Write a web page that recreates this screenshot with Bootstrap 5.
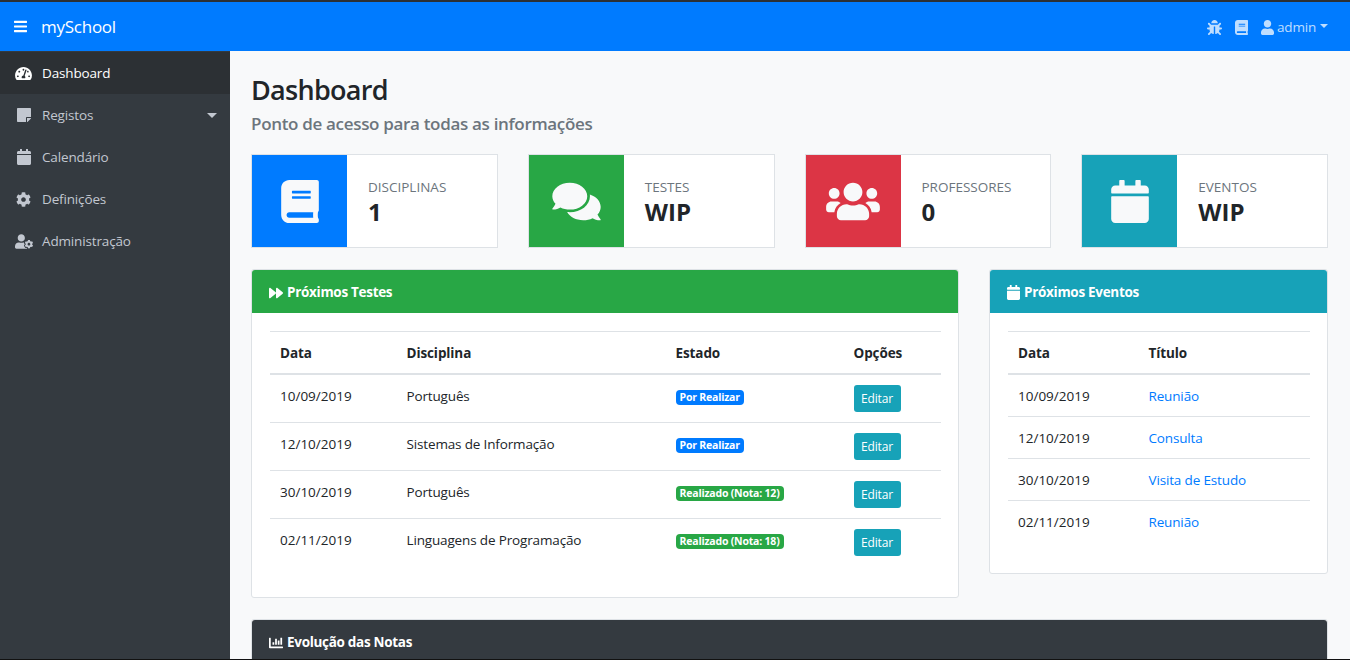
<!DOCTYPE html>
<html lang="pt">
<head>
    <meta charset="UTF-8">
    <meta name="viewport" content="width=device-width, initial-scale=1.0">
    <title>mySchool</title>
    <link href="https://cdn.jsdelivr.net/npm/bootstrap@5.3.0/dist/css/bootstrap.min.css" rel="stylesheet">
    <style>
        html, body { height: 100%; overflow: hidden; }
        body {
            background-color: #f8f9fa;
            color: #212529;
            font-family: "Open Sans", "Noto Sans", sans-serif;
            font-size: 13.5px;
            line-height: 21px;
        }
        .ico { fill: currentColor; display: inline-block; flex: none; }
        .app-frame { height: 660px; border-top: 2px solid #2b3035; border-bottom: 1px solid #111; display: flex; flex-direction: column; overflow: hidden; }

        .top-bar { background-color: #007bff; height: 49px; padding: 0 22px 0 14px; flex: none; }
        .top-toggle { color: #fff; line-height: 0; }
        .top-brand { color: #fff; font-size: 17px; letter-spacing: -.25px; margin-left: 14px; text-decoration: none; }
        .top-link { color: rgba(255, 255, 255, .75); text-decoration: none; font-size: 13.5px; letter-spacing: -.2px; padding-top: 2px; }
        .top-gap { margin-left: 13px; }
        .top-user { margin-right: 3px; }
        .top-caret { width: 0; height: 0; border-left: 4px solid transparent; border-right: 4px solid transparent; border-top: 4px solid rgba(255, 255, 255, .75); margin-left: 4px; margin-top: -3px; }

        .side-menu { width: 230px; background-color: #343a40; flex: none; padding-top: 1px; }
        .side-item { height: 42px; padding: 0 15px; color: #c2c7d0; text-decoration: none; font-size: 13.5px; letter-spacing: -.15px; }
        .side-item:hover { color: #fff; }
        .side-item.is-on { background-color: #2c3034; color: #fff; }
        .side-icon { width: 17px; margin-right: 10px; display: flex; justify-content: center; }
        .side-caret { margin-left: auto; margin-right: -2px; width: 0; height: 0; border-left: 5px solid transparent; border-right: 5px solid transparent; border-top: 5px solid #c2c7d0; }

        .main-area { padding: 21px 22px 0 21px; min-width: 0; flex: 1; }
        .page-title { font-size: 27px; line-height: 35px; font-weight: 600; letter-spacing: -.7px; margin: 0; }
        .page-sub { font-size: 17px; line-height: 30px; font-weight: 600; letter-spacing: -.32px; color: #6c757d; margin: 2px 0 15px; }

        .grid-row { --bs-gutter-x: 30px; }
        .stat-box { background: #fff; border: 1px solid #dee2e6; height: 94px; margin-bottom: 21px; }
        .stat-icon { width: 95px; flex: none; color: #f8f9fa; }
        .stat-text { padding-left: 21px; padding-top: 2px; }
        .stat-label { font-size: 13.5px; line-height: 20px; color: #6c757d; }
        .stat-value { font-size: 24px; line-height: 30px; font-weight: 700; }
        .bg-blue { background-color: #007bff; }
        .bg-green { background-color: #28a745; }
        .bg-red { background-color: #dc3545; }
        .bg-teal { background-color: #17a2b8; }
        .bg-slate { background-color: #343a40; }

        .panel { border: 1px solid #dee2e6; border-radius: 3px; margin-bottom: 21px; --bs-card-bg: #fff; }
        .panel .card-header { height: 43px; padding: 2px 17px 0; color: #fff; font-weight: 700; font-size: 13.5px; letter-spacing: -.3px; border: 0; border-radius: 3px 3px 0 0; display: flex; align-items: center; gap: 4px; }
        .panel .card-body { padding: 18px 17px 0 18px; }
        .panel .table { margin-bottom: 31px; font-size: 13.5px; color: #212529; --bs-table-bg: transparent; }
        .panel .table th, .panel .table td { padding: 11px 10.5px 9px; line-height: 21px; border-top: 1px solid #dee2e6; border-bottom: 0; vertical-align: top; }
        .panel .table th:first-child, .panel .table td:first-child { padding-left: 10px; }
        .panel .table td.edit-cell { padding-top: 10px; padding-bottom: 10px; }
        .panel .table td:not(:first-child) { letter-spacing: -.15px; }
        .panel .table th { letter-spacing: -.1px; }
        .panel .table thead th { border-bottom: 2px solid #dee2e6; }
        .panel .table tbody tr:first-child td { border-top: 0; }
        .panel .table td a { color: #007bff; text-decoration: none; }
        .state-tag { font-size: 10.5px; line-height: 11px; padding: 2px 4px; font-weight: 700; border-radius: 4px; display: inline-block; letter-spacing: -.2px; }
        .panel .table td a.edit-btn { background-color: #17a2b8; border: 0; color: #fff; font-size: 12px; height: 27px; width: 47px; padding: 0; border-radius: 3px; line-height: 27px; display: block; }
        .panel .table td a.edit-btn:hover { background-color: #138496; }
    </style>
</head>
<body>
    <svg width="0" height="0" class="position-absolute">
        <symbol id="i-bars" viewBox="0 0 448 512"><path d="M16 132h416c8.837 0 16-7.163 16-16V76c0-8.837-7.163-16-16-16H16C7.163 60 0 67.163 0 76v40c0 8.837 7.163 16 16 16zm0 160h416c8.837 0 16-7.163 16-16v-40c0-8.837-7.163-16-16-16H16c-8.837 0-16 7.163-16 16v40c0 8.837 7.163 16 16 16zm0 160h416c8.837 0 16-7.163 16-16v-40c0-8.837-7.163-16-16-16H16c-8.837 0-16 7.163-16 16v40c0 8.837 7.163 16 16 16z"/></symbol>
        <symbol id="i-calendar" viewBox="0 0 448 512"><path d="M12 192h424c6.6 0 12 5.4 12 12v260c0 26.5-21.5 48-48 48H48c-26.5 0-48-21.5-48-48V204c0-6.6 5.4-12 12-12zm436-44v-36c0-26.5-21.5-48-48-48h-48V12c0-6.6-5.4-12-12-12h-40c-6.6 0-12 5.4-12 12v52H160V12c0-6.6-5.4-12-12-12h-40c-6.6 0-12 5.4-12 12v52H48C21.5 64 0 85.5 0 112v36c0 6.6 5.4 12 12 12h424c6.6 0 12-5.4 12-12z"/></symbol>
        <symbol id="i-book" viewBox="0 0 448 512"><path d="M448 360V24c0-13.3-10.7-24-24-24H96C43 0 0 43 0 96v320c0 53 43 96 96 96h328c13.3 0 24-10.7 24-24v-16c0-7.5-3.5-14.3-8.9-18.7-4.2-15.4-4.2-59.3 0-74.7 5.4-4.3 8.9-11.1 8.9-18.6zM128 134c0-3.3 2.7-6 6-6h212c3.3 0 6 2.7 6 6v20c0 3.3-2.7 6-6 6H134c-3.3 0-6-2.7-6-6v-20zm0 64c0-3.3 2.7-6 6-6h212c3.3 0 6 2.7 6 6v20c0 3.3-2.7 6-6 6H134c-3.3 0-6-2.7-6-6v-20zm253.4 250H96c-17.7 0-32-14.3-32-32 0-17.6 14.4-32 32-32h285.4c-1.9 17.1-1.9 46.9 0 64z"/></symbol>
        <symbol id="i-comments" viewBox="0 0 576 512"><path d="M416 192c0-88.4-93.1-160-208-160S0 103.6 0 192c0 34.3 14.1 65.9 38 92-13.4 30.2-35.5 54.2-35.8 54.5-2.2 2.3-2.8 5.7-1.5 8.7S4.8 352 8 352c36.6 0 66.9-12.3 88.7-25 32.2 15.7 70.3 25 111.3 25 114.9 0 208-71.6 208-160zm122 220c23.9-26 38-57.7 38-92 0-66.9-53.5-124.2-129.3-148.1.9 6.6 1.3 13.3 1.3 20.1 0 105.9-107.7 192-240 192-10.8 0-21.3-.8-31.7-1.9C207.8 439.6 281.8 480 368 480c41 0 79.1-9.2 111.3-25 21.8 12.7 52.1 25 88.7 25 3.2 0 6.1-1.9 7.3-4.8 1.3-2.9.7-6.3-1.5-8.7-.3-.3-22.4-24.2-35.8-54.5z"/></symbol>
        <symbol id="i-users" viewBox="0 0 640 512"><path d="M96 224c35.3 0 64-28.7 64-64s-28.7-64-64-64-64 28.7-64 64 28.7 64 64 64zm448 0c35.3 0 64-28.7 64-64s-28.7-64-64-64-64 28.7-64 64 28.7 64 64 64zm32 32h-64c-17.6 0-33.5 7.1-45.1 18.6 40.3 22.1 68.9 62 75.1 109.4h66c17.7 0 32-14.3 32-32v-32c0-35.3-28.7-64-64-64zm-256 0c61.9 0 112-50.1 112-112S381.9 32 320 32 208 82.1 208 144s50.1 112 112 112zm76.8 32h-8.3c-20.8 10-43.9 16-68.5 16s-47.6-6-68.5-16h-8.3C179.6 288 128 339.6 128 403.2V432c0 26.5 21.5 48 48 48h288c26.5 0 48-21.5 48-48v-28.8c0-63.6-51.6-115.2-115.2-115.2zm-223.7-13.4C161.5 263.1 145.6 256 128 256H64c-35.3 0-64 28.7-64 64v32c0 17.7 14.3 32 32 32h65.9c6.3-47.4 34.9-87.3 75.2-109.4z"/></symbol>
        <symbol id="i-user" viewBox="0 0 448 512"><path d="M224 256c70.7 0 128-57.3 128-128S294.7 0 224 0 96 57.3 96 128s57.3 128 128 128zm89.6 32h-16.7c-22.2 10.2-46.9 16-72.9 16s-50.6-5.8-72.9-16h-16.7C60.2 288 0 348.2 0 422.4V464c0 26.5 21.5 48 48 48h352c26.5 0 48-21.5 48-48v-41.6c0-74.2-60.2-134.4-134.4-134.4z"/></symbol>
        <symbol id="i-forward" viewBox="0 0 512 512"><path d="M500.5 231.4l-192-160C287.9 54.3 256 68.6 256 96v320c0 27.4 31.9 41.8 52.5 24.6l192-160c15.3-12.8 15.3-36.4 0-49.2zm-256 0l-192-160C31.9 54.3 0 68.6 0 96v320c0 27.4 31.9 41.8 52.5 24.6l192-160c15.3-12.8 15.3-36.4 0-49.2z"/></symbol>
        <symbol id="i-chart" viewBox="0 0 512 512"><path d="M332.8 320h38.4c6.4 0 12.8-6.4 12.8-12.8V172.8c0-6.4-6.4-12.8-12.8-12.8h-38.4c-6.4 0-12.8 6.4-12.8 12.8v134.4c0 6.4 6.4 12.8 12.8 12.8zm96 0h38.4c6.4 0 12.8-6.4 12.8-12.8V76.8c0-6.4-6.4-12.8-12.8-12.8h-38.4c-6.4 0-12.8 6.4-12.8 12.8v230.4c0 6.4 6.4 12.8 12.8 12.8zm-288 0h38.4c6.4 0 12.8-6.4 12.8-12.8v-70.4c0-6.4-6.4-12.8-12.8-12.8h-38.4c-6.4 0-12.8 6.4-12.8 12.8v70.4c0 6.4 6.4 12.8 12.8 12.8zm96 0h38.4c6.4 0 12.8-6.4 12.8-12.8V108.8c0-6.4-6.4-12.8-12.8-12.8h-38.4c-6.4 0-12.8 6.4-12.8 12.8v198.4c0 6.4 6.4 12.8 12.8 12.8zM496 384H64V80c0-8.84-7.16-16-16-16H16C7.16 64 0 71.16 0 80v336c0 17.67 14.33 32 32 32h464c8.84 0 16-7.16 16-16v-32c0-8.84-7.16-16-16-16z"/></symbol>
        <symbol id="i-cog" viewBox="0 0 512 512"><path d="M487.4 315.7l-42.6-24.6c4.3-23.2 4.3-47 0-70.2l42.6-24.6c4.9-2.8 7.1-8.6 5.5-14-11.1-35.6-30-67.8-54.7-94.6-3.8-4.1-10-5.1-14.8-2.3L380.8 110c-17.9-15.4-38.5-27.3-60.8-35.1V25.8c0-5.6-3.9-10.5-9.4-11.7-36.7-8.2-74.3-7.8-109.2 0-5.5 1.2-9.4 6.1-9.4 11.7V75c-22.2 7.9-42.8 19.8-60.8 35.1L88.7 85.5c-4.9-2.8-11-1.9-14.8 2.3-24.7 26.7-43.6 58.9-54.7 94.6-1.7 5.4.6 11.2 5.5 14L67.3 221c-4.3 23.2-4.3 47 0 70.2l-42.6 24.6c-4.9 2.8-7.1 8.6-5.5 14 11.1 35.6 30 67.8 54.7 94.6 3.8 4.1 10 5.1 14.8 2.3l42.6-24.6c17.9 15.4 38.5 27.3 60.8 35.1v49.2c0 5.6 3.9 10.5 9.4 11.7 36.7 8.2 74.3 7.8 109.2 0 5.5-1.2 9.4-6.1 9.4-11.7v-49.2c22.2-7.9 42.8-19.8 60.8-35.1l42.6 24.6c4.9 2.8 11 1.9 14.8-2.3 24.7-26.7 43.6-58.9 54.7-94.6 1.5-5.5-.7-11.3-5.6-14.1zM256 336c-44.1 0-80-35.9-80-80s35.9-80 80-80 80 35.9 80 80-35.9 80-80 80z"/></symbol>
        <symbol id="i-gauge" viewBox="0 0 576 512"><path d="M288 32C128.94 32 0 160.94 0 320c0 52.8 14.25 102.26 39.06 144.8 5.61 9.62 16.3 15.2 27.44 15.2h443c11.14 0 21.83-5.58 27.44-15.2C561.75 422.26 576 372.8 576 320c0-159.06-128.94-288-288-288zm0 64c14.71 0 26.58 10.13 30.32 23.65-1.11 2.26-2.64 4.23-3.45 6.67l-9.22 27.67c-5.13 3.49-10.97 6.01-17.64 6.01-17.67 0-32-14.33-32-32S270.33 96 288 96zM96 384c-17.67 0-32-14.33-32-32s14.33-32 32-32 32 14.33 32 32-14.33 32-32 32zm48-160c-17.67 0-32-14.33-32-32s14.33-32 32-32 32 14.33 32 32-14.33 32-32 32zm246.77-72.41l-61.33 184C343.13 347.33 352 364.54 352 384c0 11.72-3.38 22.55-8.88 32H232.88c-5.5-9.45-8.88-20.28-8.88-32 0-33.94 26.5-61.43 59.9-63.59l61.34-184.01c4.17-12.56 17.73-19.45 30.36-15.17 12.57 4.19 19.35 17.79 15.17 30.36zm14.66 57.2l15.52-46.55c3.47-1.29 7.13-2.23 11.05-2.23 17.67 0 32 14.33 32 32s-14.33 32-32 32c-11.38-.01-20.89-6.28-26.57-15.22zM480 384c-17.67 0-32-14.33-32-32s14.33-32 32-32 32 14.33 32 32-14.33 32-32 32z"/></symbol>
        <symbol id="i-note" viewBox="0 0 448 512"><path d="M312 320h136V56c0-13.3-10.7-24-24-24H24C10.7 32 0 42.7 0 56v400c0 13.3 10.7 24 24 24h264V344c0-13.2 10.8-24 24-24zm129 55l-98 98c-4.5 4.5-10.6 7-17 7h-6V352h128v6.1c0 6.3-2.5 12.4-7 16.9z"/></symbol>
        <symbol id="i-usercog" viewBox="0 0 640 512"><path d="M610.5 373.3c2.6-14.1 2.6-28.5 0-42.6l25.8-14.9c3-1.7 4.3-5.2 3.3-8.5-6.7-21.6-18.2-41.2-33.2-57.4-2.3-2.5-6-3.1-9-1.4l-25.8 14.9c-10.9-9.3-23.4-16.5-36.9-21.3v-29.8c0-3.4-2.4-6.4-5.7-7.1-22.3-5-45-4.8-66.2 0-3.3.7-5.7 3.7-5.7 7.1v29.8c-13.5 4.8-26 12-36.9 21.3l-25.8-14.9c-2.9-1.7-6.7-1.1-9 1.4-15 16.2-26.5 35.8-33.2 57.4-1 3.3.4 6.8 3.3 8.5l25.8 14.9c-2.6 14.1-2.6 28.5 0 42.6l-25.8 14.9c-3 1.7-4.3 5.2-3.3 8.5 6.7 21.6 18.2 41.1 33.2 57.4 2.3 2.5 6 3.1 9 1.4l25.8-14.9c10.9 9.3 23.4 16.5 36.9 21.3v29.8c0 3.4 2.4 6.4 5.7 7.1 22.3 5 45 4.8 66.2 0 3.3-.7 5.7-3.7 5.7-7.1v-29.8c13.5-4.8 26-12 36.9-21.3l25.8 14.9c2.9 1.7 6.7 1.1 9-1.4 15-16.2 26.5-35.8 33.2-57.4 1-3.3-.4-6.8-3.3-8.5l-25.8-14.9zM496 400.5c-26.8 0-48.5-21.8-48.5-48.5s21.8-48.5 48.5-48.5 48.5 21.8 48.5 48.5-21.7 48.5-48.5 48.5zM224 256c70.7 0 128-57.3 128-128S294.7 0 224 0 96 57.3 96 128s57.3 128 128 128zm201.2 226.5c-2.3-1.2-4.6-2.6-6.8-3.9l-7.9 4.6c-6 3.4-12.8 5.3-19.6 5.3-10.9 0-21.4-4.6-28.9-12.6-18.3-19.8-32.3-43.9-40.2-69.6-5.5-17.7 1.9-36.4 17.9-45.7l7.9-4.6c-.1-2.6-.1-5.2 0-7.8l-7.9-4.6c-16-9.2-23.4-28-17.9-45.7.9-2.9 2.2-5.8 3.2-8.7-3.8-.3-7.5-1.2-11.4-1.2h-16.7c-22.2 10.2-46.9 16-72.9 16s-50.6-5.8-72.9-16h-16.7C60.2 288 0 348.2 0 422.4V464c0 26.5 21.5 48 48 48h352c10.1 0 19.5-3.2 27.2-8.5-1.2-3.8-2-7.7-2-11.8v-9.2z"/></symbol>
        <symbol id="i-bug" viewBox="0 0 512 512"><path d="M511.988 288.9c-.478 17.43-15.217 31.1-32.653 31.1H424v16c0 21.864-4.882 42.584-13.6 61.145l60.228 60.228c12.496 12.497 12.496 32.758 0 45.255-12.498 12.497-32.759 12.496-45.256 0l-54.736-54.736C345.886 467.965 314.351 480 280 480V236c0-6.627-5.373-12-12-12h-24c-6.627 0-12 5.373-12 12v244c-34.351 0-65.886-12.035-90.636-32.108l-54.736 54.736c-12.498 12.497-32.759 12.496-45.256 0-12.496-12.497-12.496-32.758 0-45.255l60.228-60.228C92.882 378.584 88 357.864 88 336v-16H32.666C15.23 320 .491 306.33.013 288.9-.484 270.816 14.028 256 32 256h56v-58.745l-46.628-46.628c-12.496-12.497-12.496-32.758 0-45.255 12.498-12.497 32.758-12.497 45.256 0L141.255 160h229.489l54.627-54.627c12.498-12.497 32.758-12.497 45.256 0 12.496 12.497 12.496 32.758 0 45.255L424 197.255V256h56c17.972 0 32.484 14.816 31.988 32.9zM257 0c-61.856 0-112 50.144-112 112h224C369 50.144 318.856 0 257 0z"/></symbol>
    </svg>

    <div class="app-frame">
        <nav class="top-bar d-flex align-items-center">
            <a class="top-toggle" href="#"><svg class="ico" width="13" height="15"><use href="#i-bars"/></svg></a>
            <a class="top-brand" href="#">mySchool</a>
            <div class="ms-auto d-flex align-items-center">
                <a class="top-link d-flex" href="#"><svg class="ico" width="15" height="15"><use href="#i-bug"/></svg></a>
                <a class="top-link d-flex top-gap" href="#"><svg class="ico" width="13" height="15"><use href="#i-book"/></svg></a>
                <a class="top-link d-flex align-items-center top-gap" href="#"><svg class="ico top-user" width="13" height="15"><use href="#i-user"/></svg>admin<span class="top-caret"></span></a>
            </div>
        </nav>

        <div class="d-flex flex-grow-1" style="min-height:0">
            <aside class="side-menu">
                <a class="side-item is-on d-flex align-items-center" href="#"><span class="side-icon"><svg class="ico" width="17" height="15"><use href="#i-gauge"/></svg></span>Dashboard</a>
                <a class="side-item d-flex align-items-center" href="#"><span class="side-icon"><svg class="ico" width="14" height="16"><use href="#i-note"/></svg></span>Registos<span class="side-caret"></span></a>
                <a class="side-item d-flex align-items-center" href="#"><span class="side-icon"><svg class="ico" width="14" height="16"><use href="#i-calendar"/></svg></span>Calendário</a>
                <a class="side-item d-flex align-items-center" href="#"><span class="side-icon"><svg class="ico" width="15" height="15"><use href="#i-cog"/></svg></span>Definições</a>
                <a class="side-item d-flex align-items-center" href="#"><span class="side-icon"><svg class="ico" width="18" height="15"><use href="#i-usercog"/></svg></span>Administração</a>
            </aside>

            <main class="main-area">
                <h1 class="page-title">Dashboard</h1>
                <p class="page-sub">Ponto de acesso para todas as informações</p>

                <div class="row grid-row">
                    <div class="col-3">
                        <div class="stat-box d-flex">
                            <div class="stat-icon bg-blue d-flex align-items-center justify-content-center"><svg class="ico" width="38" height="43"><use href="#i-book"/></svg></div>
                            <div class="stat-text d-flex flex-column justify-content-center">
                                <div class="stat-label">DISCIPLINAS</div>
                                <div class="stat-value">1</div>
                            </div>
                        </div>
                    </div>
                    <div class="col-3">
                        <div class="stat-box d-flex">
                            <div class="stat-icon bg-green d-flex align-items-center justify-content-center"><svg class="ico" width="49" height="43"><use href="#i-comments"/></svg></div>
                            <div class="stat-text d-flex flex-column justify-content-center">
                                <div class="stat-label">TESTES</div>
                                <div class="stat-value">WIP</div>
                            </div>
                        </div>
                    </div>
                    <div class="col-3">
                        <div class="stat-box d-flex">
                            <div class="stat-icon bg-red d-flex align-items-center justify-content-center"><svg class="ico" width="54" height="43"><use href="#i-users"/></svg></div>
                            <div class="stat-text d-flex flex-column justify-content-center">
                                <div class="stat-label">PROFESSORES</div>
                                <div class="stat-value">0</div>
                            </div>
                        </div>
                    </div>
                    <div class="col-3">
                        <div class="stat-box d-flex">
                            <div class="stat-icon bg-teal d-flex align-items-center justify-content-center"><svg class="ico" width="38" height="43"><use href="#i-calendar"/></svg></div>
                            <div class="stat-text d-flex flex-column justify-content-center">
                                <div class="stat-label">EVENTOS</div>
                                <div class="stat-value">WIP</div>
                            </div>
                        </div>
                    </div>
                </div>

                <div class="row grid-row">
                    <div class="col-8">
                        <div class="card panel">
                            <div class="card-header bg-green"><svg class="ico" width="14" height="14"><use href="#i-forward"/></svg>Próximos Testes</div>
                            <div class="card-body">
                                <table class="table">
                                    <thead>
                                        <tr><th style="width:126px">Data</th><th style="width:269px">Disciplina</th><th style="width:178px">Estado</th><th>Opções</th></tr>
                                    </thead>
                                    <tbody>
                                        <tr><td>10/09/2019</td><td>Português</td><td><span class="state-tag bg-blue text-white">Por Realizar</span></td><td class="edit-cell"><a class="btn edit-btn" href="#">Editar</a></td></tr>
                                        <tr><td>12/10/2019</td><td>Sistemas de Informação</td><td><span class="state-tag bg-blue text-white">Por Realizar</span></td><td class="edit-cell"><a class="btn edit-btn" href="#">Editar</a></td></tr>
                                        <tr><td>30/10/2019</td><td>Português</td><td><span class="state-tag bg-green text-white">Realizado (Nota: 12)</span></td><td class="edit-cell"><a class="btn edit-btn" href="#">Editar</a></td></tr>
                                        <tr><td>02/11/2019</td><td>Linguagens de Programação</td><td><span class="state-tag bg-green text-white">Realizado (Nota: 18)</span></td><td class="edit-cell"><a class="btn edit-btn" href="#">Editar</a></td></tr>
                                    </tbody>
                                </table>
                            </div>
                        </div>
                    </div>
                    <div class="col-4">
                        <div class="card panel">
                            <div class="card-header bg-teal"><svg class="ico" width="13" height="15"><use href="#i-calendar"/></svg>Próximos Eventos</div>
                            <div class="card-body">
                                <table class="table">
                                    <thead>
                                        <tr><th style="width:130px">Data</th><th>Título</th></tr>
                                    </thead>
                                    <tbody>
                                        <tr><td>10/09/2019</td><td><a href="#">Reunião</a></td></tr>
                                        <tr><td>12/10/2019</td><td><a href="#">Consulta</a></td></tr>
                                        <tr><td>30/10/2019</td><td><a href="#">Visita de Estudo</a></td></tr>
                                        <tr><td>02/11/2019</td><td><a href="#">Reunião</a></td></tr>
                                    </tbody>
                                </table>
                            </div>
                        </div>
                    </div>
                </div>

                <div class="card panel">
                    <div class="card-header bg-slate"><svg class="ico" width="14" height="14"><use href="#i-chart"/></svg>Evolução das Notas</div>
                    <div class="card-body" style="height:300px"></div>
                </div>
            </main>
        </div>
    </div>
    <script src="https://cdn.jsdelivr.net/npm/bootstrap@5.3.0/dist/js/bootstrap.bundle.min.js"></script>
</body>
</html>
